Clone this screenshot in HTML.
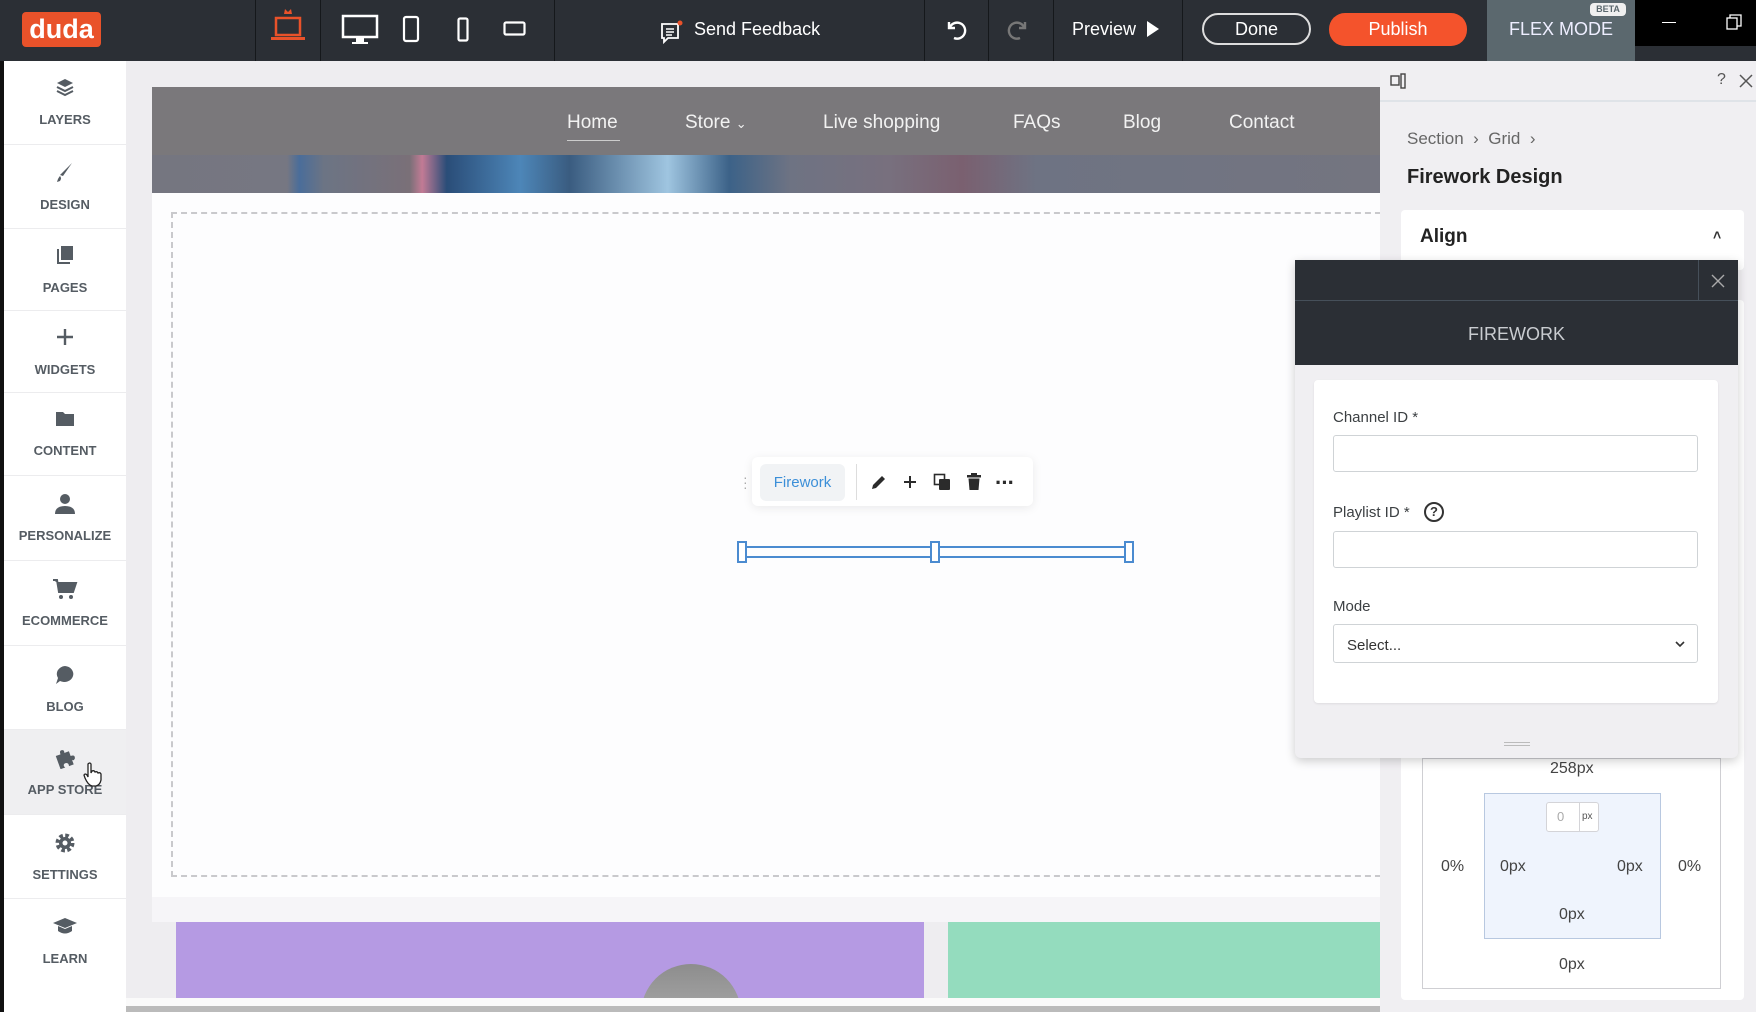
<!DOCTYPE html>
<html><head><meta charset="utf-8"><style>
*{box-sizing:border-box;margin:0;padding:0}
body{width:1756px;height:1012px;overflow:hidden;position:relative;background:#eeedf0;font-family:"Liberation Sans",sans-serif}
.a{position:absolute}
.top{left:0;top:0;width:1756px;height:61px;background:#2b2f35}
.sep{position:absolute;top:0;width:1px;height:61px;background:#15181b}
.tw{color:#fff;font-size:18px}
.side{left:4px;top:61px;width:122px;height:951px;background:#fff}
.item{position:absolute;left:0;width:122px;text-align:center;color:#555c63;font-size:13px;font-weight:bold;border-bottom:1px solid #ececee}
.item svg{display:block;margin:0 auto}
.item div{margin-top:15px !important}
.nav{color:#f2f2f2;font-size:19px;top:112px}
.lab{color:#3c4043;font-size:15px}
.inp{position:absolute;background:#fff;border:1px solid #cfd3d6;border-radius:3px}
.gt{color:#444;font-size:16px}
</style></head><body>
<div class="a top">
 <div class="a" style="left:22px;top:12px;width:79px;height:35px;background:#e9522a;border-radius:4px;color:#fff;font-weight:bold;font-size:27px;text-align:center;line-height:34px">duda</div>
 <div class="sep" style="left:255px"></div><div class="sep" style="left:320px"></div><div class="sep" style="left:554px"></div>
 <div class="sep" style="left:924px"></div><div class="sep" style="left:988px"></div><div class="sep" style="left:1053px"></div><div class="sep" style="left:1182px"></div>
 <svg class="a" style="left:268px;top:6px" width="40" height="36" viewBox="0 0 40 36"><path d="M16 8 L17 3 L20 6 L23 3 L24 8Z" fill="#e9522a"/><rect x="8" y="12" width="24" height="17" fill="none" stroke="#e9522a" stroke-width="2.5"/><rect x="3" y="31" width="34" height="3" fill="#e9522a"/></svg>
 <svg class="a" style="left:341px;top:14px" width="38" height="32" viewBox="0 0 38 32"><rect x="2" y="2" width="34" height="21" fill="none" stroke="#fff" stroke-width="2.5"/><rect x="15" y="24" width="8" height="4" fill="#fff"/><rect x="11" y="28" width="16" height="2" fill="#fff"/></svg>
 <svg class="a" style="left:402px;top:15px" width="18" height="28"><rect x="2" y="2" width="14" height="24" rx="2" fill="none" stroke="#fff" stroke-width="2.2"/></svg>
 <svg class="a" style="left:457px;top:17px" width="12" height="26"><rect x="1.5" y="1.5" width="9" height="22" rx="1.5" fill="none" stroke="#fff" stroke-width="2.2"/></svg>
 <svg class="a" style="left:503px;top:21px" width="24" height="16"><rect x="1.5" y="1.5" width="20" height="12" rx="1.5" fill="none" stroke="#fff" stroke-width="2.2"/></svg>
 <svg class="a" style="left:660px;top:19px" width="24" height="26" viewBox="0 0 24 26"><path d="M2 5 H18 V19 H8 L4 23 V19 H2Z" fill="none" stroke="#fff" stroke-width="1.8"/><path d="M6 10H14M6 13H14M6 16H12" stroke="#fff" stroke-width="1.4"/><circle cx="20" cy="4" r="2.5" fill="#e9522a"/></svg>
 <div class="a tw" style="left:694px;top:19px">Send Feedback</div>
 <svg class="a" style="left:943px;top:17px" width="24" height="24" viewBox="0 0 24 24"><path d="M6 5 V11 H12" fill="none" stroke="#fff" stroke-width="2.4"/><path d="M7 10 A8 8 0 1 1 11 21" fill="none" stroke="#fff" stroke-width="2.4"/></svg>
 <svg class="a" style="left:1007px;top:17px" width="24" height="24" viewBox="0 0 24 24"><path d="M18 5 V11 H12" fill="none" stroke="#777" stroke-width="2.4"/><path d="M17 10 A8 8 0 1 0 13 21" fill="none" stroke="#777" stroke-width="2.4"/></svg>
 <div class="a tw" style="left:1072px;top:19px">Preview</div>
 <svg class="a" style="left:1146px;top:20px" width="14" height="18"><path d="M1 1 L13 9 L1 17Z" fill="#fff"/></svg>
 <div class="a" style="left:1202px;top:13px;width:109px;height:32px;border:2px solid #ddd;border-radius:16px;color:#fff;font-size:18px;text-align:center;line-height:28px">Done</div>
 <div class="a" style="left:1329px;top:13px;width:138px;height:33px;background:#f4532c;border-radius:16px;color:#fff;font-size:18px;text-align:center;line-height:33px">Publish</div>
 <div class="a" style="left:1487px;top:0;width:148px;height:61px;background:#5b686e;color:#eef;font-size:18px;text-align:center;line-height:58px">FLEX MODE</div>
 <div class="a" style="left:1590px;top:3px;width:36px;height:13px;background:#f0f0f0;border-radius:4px;color:#5b686e;font-size:9px;font-weight:bold;text-align:center;line-height:13px">BETA</div>
 <div class="a" style="left:1635px;top:0;width:121px;height:46px;background:#000"></div>
 <div class="a" style="left:1662px;top:22px;width:14px;height:1px;background:#fff"></div>
 <svg class="a" style="left:1726px;top:14px" width="16" height="16"><rect x="1" y="4" width="10" height="11" fill="none" stroke="#fff" stroke-width="1.3"/><path d="M4 4V1H15V12H11" fill="none" stroke="#fff" stroke-width="1.3"/></svg>
</div>
<div class="a" style="left:0;top:61px;width:4px;height:951px;background:#111"></div>
<div class="a side">
 <div class="item" style="top:0;height:84px"><svg style="margin-top:16px" width="20" height="20" viewBox="0 0 20 20"><path d="M10 2 L18 6 L10 10 L2 6Z" fill="#555c63"/><path d="M2 10 L10 14 L18 10 M2 14 L10 18 L18 14" fill="none" stroke="#555c63" stroke-width="2"/></svg><div>LAYERS</div></div>
 <div class="item" style="top:84px;height:84px"><svg style="margin-top:16px" width="20" height="24" viewBox="0 0 20 24"><path d="M17 2 L8 15 L5 14Z" fill="#555c63"/><path d="M5 15 Q7 17 5 20 L2 21 Q3 17 5 15Z" fill="#555c63"/></svg><div style="margin-top:12px!important">DESIGN</div></div>
 <div class="item" style="top:168px;height:82px"><svg style="margin-top:16px" width="20" height="20"><rect x="6" y="1" width="12" height="14" fill="#555c63"/><path d="M3 4V18H15" fill="none" stroke="#555c63" stroke-width="2"/></svg><div>PAGES</div></div>
 <div class="item" style="top:250px;height:82px"><svg style="margin-top:16px" width="20" height="20"><path d="M10 2V18M2 10H18" stroke="#555c63" stroke-width="2.4"/></svg><div>WIDGETS</div></div>
 <div class="item" style="top:332px;height:83px"><svg style="margin-top:17px" width="20" height="18"><path d="M1 2H8L10 4H19V16H1Z" fill="#555c63"/></svg><div>CONTENT</div></div>
 <div class="item" style="top:415px;height:85px"><svg style="margin-top:17px" width="22" height="22"><circle cx="11" cy="6" r="5" fill="#555c63"/><path d="M1 21 Q1 13 11 13 Q21 13 21 21Z" fill="#555c63"/></svg><div style="margin-top:13px!important">PERSONALIZE</div></div>
 <div class="item" style="top:500px;height:85px"><svg style="margin-top:17px" width="26" height="22"><path d="M1 2H5L7 14H21L24 5H6" fill="#555c63" stroke="#555c63" stroke-width="2"/><circle cx="9" cy="19" r="2" fill="#555c63"/><circle cx="19" cy="19" r="2" fill="#555c63"/></svg><div style="margin-top:13px!important">ECOMMERCE</div></div>
 <div class="item" style="top:585px;height:84px;background:#fff"><svg style="margin-top:18px" width="22" height="22"><path d="M11 2 A9 8 0 1 1 6 17 L2 20 L4 14 A9 8 0 0 1 11 2Z" fill="#555c63"/></svg><div style="margin-top:13px!important">BLOG</div></div>
 <div class="item" style="top:669px;height:85px;background:#efeff1"><svg style="margin-top:17px" width="24" height="22"><path d="M4 6H9Q9 1 13 3Q14 5 13 6H18V11Q23 11 21 15Q19 17 18 15V20H13Q14 16 10 16Q7 17 9 20H4Z" fill="#555c63" transform="rotate(-20 12 11)"/></svg><div style="margin-top:13px!important">APP STORE</div></div>
 <div class="item" style="top:754px;height:84px"><svg style="margin-top:17px" width="22" height="22" viewBox="0 0 22 22"><circle cx="11" cy="11" r="7" fill="none" stroke="#555c63" stroke-width="5" stroke-dasharray="3.3 2.2"/><circle cx="11" cy="11" r="6" fill="#555c63"/><circle cx="11" cy="11" r="2.5" fill="#fff"/></svg><div style="margin-top:13px!important">SETTINGS</div></div>
 <div class="item" style="top:838px;height:90px;border:none"><svg style="margin-top:17px" width="26" height="22"><path d="M13 2L25 7L13 12L1 7Z" fill="#555c63"/><path d="M6 10V15Q13 20 20 15V10L13 13Z" fill="#555c63"/></svg><div style="margin-top:13px!important">LEARN</div></div>
</div>
<svg class="a" style="left:82px;top:762px" width="22" height="26" viewBox="0 0 22 26"><path d="M6 2 Q8 0 9 2 V11 L10 9 Q12 8 13 10 Q15 9 16 11 Q18 10 19 12 V18 Q18 23 14 24 H10 Q6 23 3 16 L2 13 Q3 11 5 13 L6 15Z" fill="#fff" stroke="#222" stroke-width="1.3"/></svg>
<div class="a" style="left:152px;top:87px;width:1228px;height:68px;background:#7a787b"></div>
<div class="a" style="left:152px;top:155px;width:1228px;height:38px;background:linear-gradient(90deg,#757680 0%,#767782 11%,#4a6d9a 12%,#6c7484 14%,#7a7078 21%,#c27b95 22%,#2a4d78 24%,#4d86b8 30%,#3a5c80 34%,#9fc5e0 42%,#3c6288 47%,#6e7383 52%,#78707e 60%,#7a6070 66%,#6e7383 72%,#747580 100%)"></div>
<div class="a nav" style="left:567px">Home</div>
<div class="a" style="left:567px;top:140px;width:53px;height:1px;background:#ccc"></div>
<div class="a nav" style="left:685px">Store <span style="font-size:13px">&#8964;</span></div>
<div class="a nav" style="left:823px">Live shopping</div>
<div class="a nav" style="left:1013px">FAQs</div>
<div class="a nav" style="left:1123px">Blog</div>
<div class="a nav" style="left:1229px">Contact</div>
<div class="a" style="left:152px;top:193px;width:1228px;height:704px;background:#fdfdfe"></div>
<div class="a" style="left:171px;top:212px;width:1220px;height:665px;border:2px dashed #c9c9cc"></div>
<div class="a" style="left:152px;top:897px;width:1228px;height:25px;background:#f6f5f8"></div>
<div class="a" style="left:176px;top:922px;width:748px;height:76px;background:#b59ae3;overflow:hidden"><div class="a" style="left:465px;top:42px;width:100px;height:60px;border-radius:50px 50px 0 0;background:linear-gradient(#8d8d8d,#aaa)"></div></div>
<div class="a" style="left:948px;top:922px;width:432px;height:76px;background:#94dcbe"></div>
<div class="a" style="left:126px;top:998px;width:1254px;height:8px;background:#fafafa"></div>
<div class="a" style="left:126px;top:1006px;width:1254px;height:6px;background:#bbb"></div>
<div class="a" style="left:752px;top:457px;width:281px;height:49px;background:#fff;border-radius:6px;box-shadow:0 2px 10px rgba(0,0,0,.08)"></div>
<div class="a" style="left:743px;top:475px;color:#aaa;font-size:14px;line-height:5px">·<br>·<br>·</div>
<div class="a" style="left:760px;top:464px;width:85px;height:37px;background:#f1f3f5;border-radius:6px;color:#3c8fd8;font-size:15px;text-align:center;line-height:37px">Firework</div>
<div class="a" style="left:856px;top:464px;width:1px;height:36px;background:#ddd"></div>
<svg class="a" style="left:870px;top:473px" width="18" height="18"><path d="M2 16 L3 12 L12 3 L15 6 L6 15Z" fill="#2b2b2b"/></svg>
<svg class="a" style="left:902px;top:474px" width="16" height="16"><path d="M8 2V14M2 8H14" stroke="#2b2b2b" stroke-width="2"/></svg>
<svg class="a" style="left:933px;top:473px" width="18" height="18"><rect x="1.5" y="1.5" width="10" height="10" fill="none" stroke="#2b2b2b" stroke-width="1.6"/><rect x="6" y="6" width="11" height="11" rx="1" fill="#2b2b2b"/></svg>
<svg class="a" style="left:966px;top:473px" width="16" height="18"><rect x="1" y="2" width="14" height="2.5" fill="#2b2b2b"/><rect x="5" y="0" width="6" height="2" fill="#2b2b2b"/><path d="M2.5 5.5H13.5L12.5 17H3.5Z" fill="#2b2b2b"/></svg>
<div class="a" style="left:995px;top:470px;color:#2b2b2b;font-size:22px;font-weight:bold;letter-spacing:-1px">···</div>
<div class="a" style="left:741px;top:546px;width:388px;height:12px;border-top:2px solid #4b8bd0;border-bottom:2px solid #4b8bd0"></div>
<div class="a" style="left:737px;top:541px;width:10px;height:22px;border:2px solid #4b8bd0;background:#fff"></div>
<div class="a" style="left:930px;top:541px;width:10px;height:22px;border:2px solid #4b8bd0;background:#fff"></div>
<div class="a" style="left:1124px;top:541px;width:10px;height:22px;border:2px solid #4b8bd0;background:#fff"></div>
<div class="a" style="left:1380px;top:61px;width:376px;height:951px;background:#f0eff2"></div>
<div class="a" style="left:1380px;top:61px;width:376px;height:41px;border-bottom:2px solid #dfe3e8"></div>
<svg class="a" style="left:1390px;top:73px" width="18" height="16"><rect x="1" y="3" width="8" height="9" fill="none" stroke="#444" stroke-width="1.4"/><rect x="11" y="1" width="4" height="14" fill="none" stroke="#444" stroke-width="1.4"/></svg>
<div class="a" style="left:1717px;top:71px;color:#555;font-size:16px">?</div>
<svg class="a" style="left:1739px;top:74px" width="14" height="14"><path d="M1 1L13 13M13 1L1 13" stroke="#555" stroke-width="1.5"/></svg>
<div class="a" style="left:1407px;top:129px;color:#666;font-size:17px">Section &nbsp;›&nbsp; Grid &nbsp;›</div>
<div class="a" style="left:1407px;top:166px;color:#222;font-size:20px;font-weight:bold">Firework Design</div>
<div class="a" style="left:1401px;top:210px;width:343px;height:60px;background:#fff;border-radius:4px"></div>
<div class="a" style="left:1420px;top:226px;color:#222;font-size:19px;font-weight:bold">Align</div>
<div class="a" style="left:1713px;top:227px;color:#333;font-size:14px;font-weight:bold">˄</div>
<div class="a" style="left:1401px;top:300px;width:343px;height:700px;background:#fff;border-radius:4px"></div>
<div class="a" style="left:1422px;top:758px;width:299px;height:231px;border:1px solid #cfcfd3"></div>
<div class="a" style="left:1484px;top:793px;width:177px;height:146px;background:#eff4fd;border:1px solid #b8c8e0"></div>
<div class="a" style="left:1546px;top:802px;width:53px;height:30px;background:#fff;border:1px solid #d4d4d8;border-radius:3px"></div>
<div class="a" style="left:1579px;top:802px;width:1px;height:30px;background:#d4d4d8"></div>
<div class="a" style="left:1557px;top:809px;color:#aaa;font-size:13px">0</div>
<div class="a" style="left:1582px;top:811px;color:#555;font-size:10px">px</div>
<div class="a gt" style="left:1550px;top:760px">258px</div>
<div class="a gt" style="left:1441px;top:858px">0%</div>
<div class="a gt" style="left:1678px;top:858px">0%</div>
<div class="a gt" style="left:1500px;top:858px">0px</div>
<div class="a gt" style="left:1617px;top:858px">0px</div>
<div class="a gt" style="left:1559px;top:906px">0px</div>
<div class="a gt" style="left:1559px;top:956px">0px</div>
<div class="a" style="left:1295px;top:260px;width:443px;height:498px;background:#f0eff2;border-radius:0 0 6px 6px;box-shadow:0 3px 10px rgba(0,0,0,.2)"></div>
<div class="a" style="left:1295px;top:260px;width:443px;height:105px;background:#2b2f35"></div>
<div class="a" style="left:1295px;top:300px;width:443px;height:1px;background:#46505a"></div>
<div class="a" style="left:1698px;top:260px;width:1px;height:40px;background:#46505a"></div>
<svg class="a" style="left:1711px;top:274px" width="14" height="14"><path d="M1 1L13 13M13 1L1 13" stroke="#aaa" stroke-width="1.4"/></svg>
<div class="a" style="left:1295px;top:324px;width:443px;text-align:center;color:#c9ccd0;font-size:18px">FIREWORK</div>
<div class="a" style="left:1314px;top:380px;width:404px;height:323px;background:#fff;border-radius:4px;box-shadow:0 1px 2px rgba(0,0,0,.08)"></div>
<div class="a lab" style="left:1333px;top:409px">Channel ID *</div>
<div class="inp" style="left:1333px;top:435px;width:365px;height:37px"></div>
<div class="a lab" style="left:1333px;top:504px">Playlist ID * </div>
<div class="a" style="left:1424px;top:502px;width:20px;height:20px;border:2px solid #333;border-radius:50%;color:#333;font-size:13px;font-weight:bold;text-align:center;line-height:16px">?</div>
<div class="inp" style="left:1333px;top:531px;width:365px;height:37px"></div>
<div class="a lab" style="left:1333px;top:598px">Mode</div>
<div class="inp" style="left:1333px;top:624px;width:365px;height:39px"></div>
<div class="a lab" style="left:1347px;top:637px;color:#333">Select...</div>
<svg class="a" style="left:1675px;top:640px" width="10" height="8"><path d="M1 2L5 6L9 2" fill="none" stroke="#333" stroke-width="1.6"/></svg>
<div class="a" style="left:1504px;top:742px;width:26px;height:4px;border-top:1px solid #bbb;border-bottom:1px solid #bbb"></div>
</body></html>
